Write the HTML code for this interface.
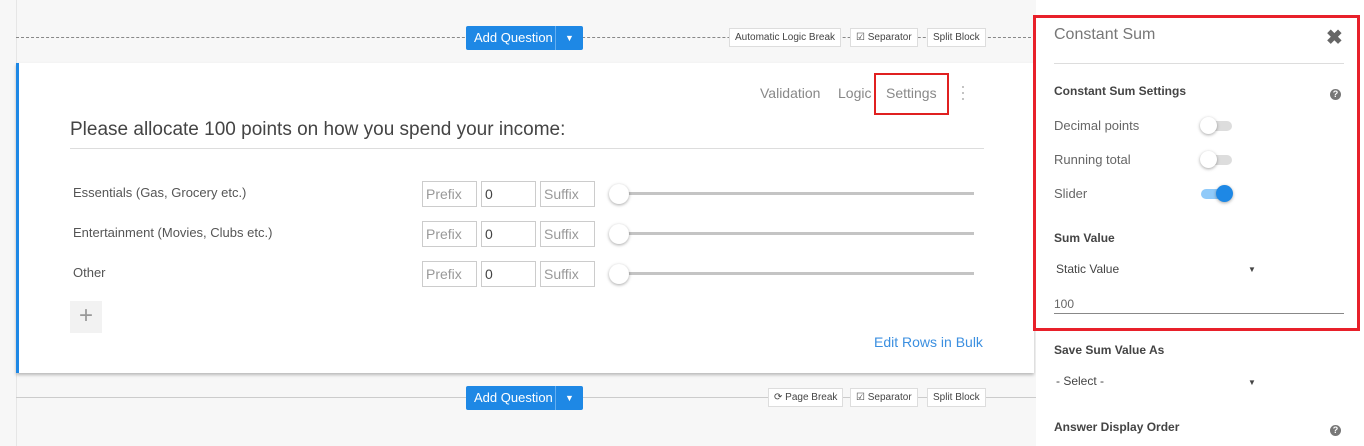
<!DOCTYPE html>
<html><head><style>
*{box-sizing:border-box;margin:0;padding:0}
body{width:1364px;height:446px;overflow:hidden;background:#f7f7f7;font-family:"Liberation Sans",sans-serif;position:relative;color:#555}
.abs{position:absolute}
.left{left:16px;top:0;width:1020px;height:446px;background:#f7f7f7;border-left:1px solid #e6e6e6}
.btn{background:#1e88e5;color:#fff;font-size:13px;height:24px;line-height:24px;border-radius:2px}
.tag{background:#fff;border:1px solid #ddd;font-size:10px;color:#444;height:19px;line-height:17px;padding:0 5px}
.card{left:16px;top:63px;width:1018px;height:310px;background:#fff;border-left:3px solid #1e88e5;box-shadow:0 2px 3px rgba(0,0,0,.25)}
.inp{position:absolute;width:55px;height:26px;border:1px solid #ccc;font-size:14px;line-height:24px;padding-left:3px;color:#999}
.row{font-size:13px;color:#555}
.track{position:absolute;height:3px;background:#c4c4c4;width:355px}
.knob{position:absolute;width:20px;height:20px;border-radius:50%;background:#fff;box-shadow:0 1px 3px rgba(0,0,0,.35)}
.panel{left:1036px;top:0;width:328px;height:446px;background:#fff}
.lbl{font-size:13px;color:#666}
.h{font-size:12px;font-weight:bold;color:#444}
.sw{position:absolute;width:30px;height:10px;border-radius:5px;background:#ddd}
.sw i{position:absolute;left:-2px;top:-4px;width:17px;height:17px;border-radius:50%;background:#fff;box-shadow:0 1px 3px rgba(0,0,0,.35)}
.q{position:absolute;width:11px;height:11px;border-radius:50%;background:#777;color:#fff;font-size:9px;font-weight:bold;text-align:center;line-height:11px}
</style></head><body>
<div class="abs left"></div>
<div class="abs" style="left:16px;top:37px;width:1020px;border-top:1px dashed #888"></div>
<div class="abs btn" style="left:466px;top:26px;width:117px"><span style="padding-left:8px">Add Question</span><span style="position:absolute;left:89px;top:0;border-left:1px solid #64aef0;width:28px;text-align:center;font-size:9px">▼</span></div>
<div class="abs tag" style="left:729px;top:28px">Automatic Logic Break</div>
<div class="abs tag" style="left:850px;top:28px">☑ Separator</div>
<div class="abs tag" style="left:927px;top:28px">Split Block</div>

<div class="abs card">
<div class="abs" style="left:741px;top:22px;font-size:14px;color:#888">Validation</div>
<div class="abs" style="left:819px;top:22px;font-size:14px;color:#888">Logic</div>
<div class="abs" style="left:855px;top:10px;width:75px;height:42px;border:2px solid #e02020"></div>
<div class="abs" style="left:867px;top:22px;font-size:14px;color:#888">Settings</div>
<div class="abs" style="left:941px;top:20px;width:4px;color:#bbb;font-size:18px;line-height:6px">·<br>·<br>·</div>
<div class="abs" style="left:51px;top:56px;font-size:19px;color:#444">Please allocate 100 points on how you spend your income:</div>
<div class="abs" style="left:51px;top:85px;width:914px;border-top:1px solid #ddd"></div>
</div>

<div class="abs row" style="left:73px;top:185px">Essentials (Gas, Grocery etc.)</div>
<div class="abs row" style="left:73px;top:225px">Entertainment (Movies, Clubs etc.)</div>
<div class="abs row" style="left:73px;top:265px">Other</div>
<div class="inp" style="left:422px;top:181px">Prefix</div><div class="inp" style="left:481px;top:181px;color:#444">0</div><div class="inp" style="left:540px;top:181px">Suffix</div>
<div class="inp" style="left:422px;top:221px">Prefix</div><div class="inp" style="left:481px;top:221px;color:#444">0</div><div class="inp" style="left:540px;top:221px">Suffix</div>
<div class="inp" style="left:422px;top:261px">Prefix</div><div class="inp" style="left:481px;top:261px;color:#444">0</div><div class="inp" style="left:540px;top:261px">Suffix</div>
<div class="track" style="left:619px;top:192px"></div><div class="knob" style="left:609px;top:184px"></div>
<div class="track" style="left:619px;top:232px"></div><div class="knob" style="left:609px;top:224px"></div>
<div class="track" style="left:619px;top:272px"></div><div class="knob" style="left:609px;top:264px"></div>
<div class="abs" style="left:70px;top:301px;width:32px;height:32px;background:#f2f2f2;color:#999;font-size:24px;text-align:center;line-height:30px">+</div>
<div class="abs" style="left:874px;top:334px;font-size:14px;color:#3b8fe0">Edit Rows in Bulk</div>

<div class="abs" style="left:16px;top:397px;width:1020px;border-top:1px solid #ccc"></div>
<div class="abs btn" style="left:466px;top:386px;width:117px"><span style="padding-left:8px">Add Question</span><span style="position:absolute;left:89px;top:0;border-left:1px solid #64aef0;width:28px;text-align:center;font-size:9px">▼</span></div>
<div class="abs tag" style="left:768px;top:388px">⟳ Page Break</div>
<div class="abs tag" style="left:850px;top:388px">☑ Separator</div>
<div class="abs tag" style="left:927px;top:388px">Split Block</div>

<div class="abs panel"></div>
<div class="abs" style="left:1033px;top:15px;width:327px;height:316px;border:3px solid #e8202a"></div>
<div class="abs" style="left:1054px;top:26px;font-size:16px;color:#777">Constant Sum</div>
<div class="abs" style="left:1326px;top:28px;font-size:20px;font-weight:bold;color:#666;line-height:20px">✖</div>
<div class="abs" style="left:1054px;top:63px;width:290px;border-top:1px solid #ddd"></div>
<div class="abs h" style="left:1054px;top:84px">Constant Sum Settings</div>
<div class="q" style="left:1330px;top:89px">?</div>
<div class="abs lbl" style="left:1054px;top:118px">Decimal points</div>
<div class="sw" style="left:1202px;top:121px"><i></i></div>
<div class="abs lbl" style="left:1054px;top:152px">Running total</div>
<div class="sw" style="left:1202px;top:155px"><i></i></div>
<div class="abs lbl" style="left:1054px;top:186px">Slider</div>
<div class="sw" style="left:1201px;top:189px;background:#90caf9"><i style="left:15px;background:#1e88e5"></i></div>
<div class="abs h" style="left:1054px;top:231px">Sum Value</div>
<div class="abs" style="left:1056px;top:262px;font-size:12px;color:#444">Static Value</div>
<div class="abs" style="left:1248px;top:265px;font-size:8px;color:#444">▼</div>
<div class="abs" style="left:1054px;top:297px;font-size:12px;color:#666">100</div>
<div class="abs" style="left:1054px;top:313px;width:290px;border-top:1px solid #888"></div>
<div class="abs h" style="left:1054px;top:343px">Save Sum Value As</div>
<div class="abs" style="left:1056px;top:374px;font-size:12px;color:#444">- Select -</div>
<div class="abs" style="left:1248px;top:378px;font-size:8px;color:#444">▼</div>
<div class="abs h" style="left:1054px;top:420px">Answer Display Order</div>
<div class="q" style="left:1330px;top:425px">?</div>
</body></html>
